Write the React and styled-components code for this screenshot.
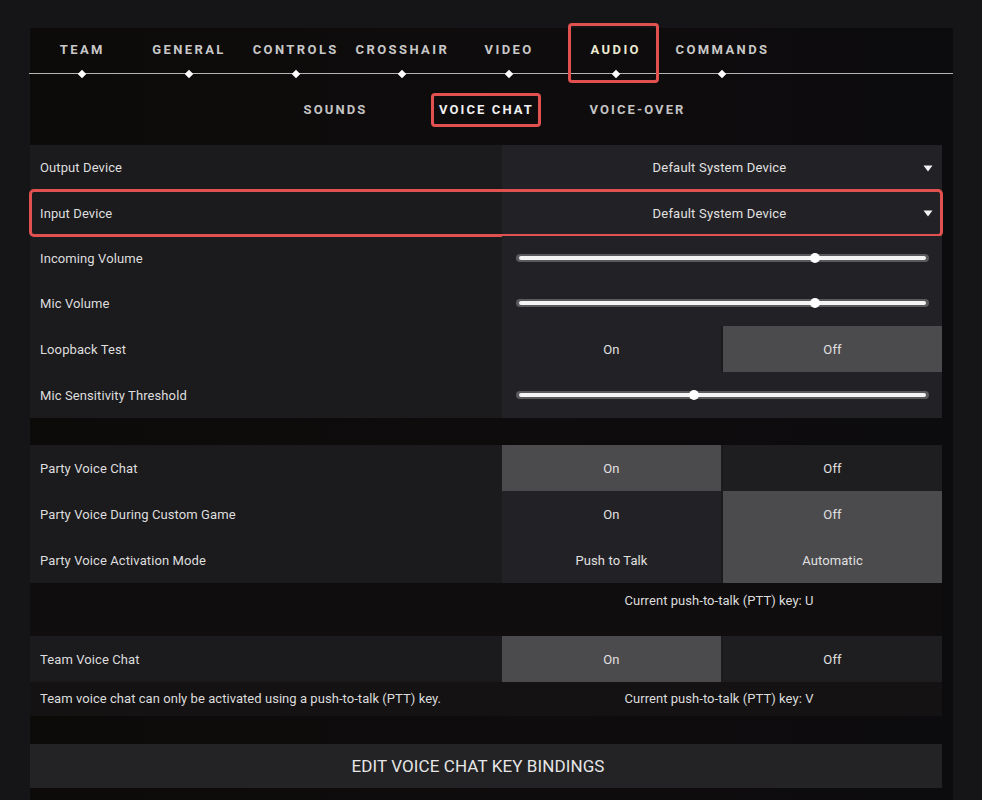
import React from "react";
import styled, { createGlobalStyle } from "styled-components";

const GlobalStyle = createGlobalStyle`
  body {
    margin: 0;
    background: #151517;
    font-family: Roboto, "Liberation Sans", sans-serif;
    color: #dcdcdc;
  }
`;

const Page = styled.div`
  height: 800px;
  overflow: hidden;
  padding-top: 28px;
  box-sizing: border-box;
`;

const Panel = styled.div`
  margin-left: 30px;
  width: 923px;
  height: 772px;
  background: linear-gradient(90deg, #0d0a0a 0%, #0f0c0d 55%, #0c0b0d 100%);
`;

const TabBar = styled.div`
  display: flex;
  height: 45px;
  margin-left: -1px;
  border-bottom: 1px solid #b4b4b4;
`;

const Tab = styled.div`
  position: relative;
  width: 106.7px;
  display: flex;
  justify-content: center;
  padding-top: 15px;
  box-sizing: border-box;
  font-size: 13px;
  font-weight: 700;
  letter-spacing: 2.4px;
  line-height: 14px;
  color: ${(p) => (p.$active ? "#ecebd2" : "#c8c8c8")};

  &::before {
    content: "";
    position: absolute;
    bottom: -4px;
    left: 50%;
    width: 6px;
    height: 6px;
    margin-left: -3px;
    background: #fff;
    transform: rotate(45deg);
  }

  ${(p) =>
    p.$active &&
    `
    &::after {
      content: "";
      position: absolute;
      top: -5px;
      bottom: -10px;
      left: 6px;
      right: 10px;
      border: 3px solid #e0514f;
      border-radius: 4px;
    }
  `}
`;

const SubTabs = styled.div`
  width: 912px;
  height: 71px;
  display: flex;
  justify-content: center;
  align-items: center;
`;

const SubTab = styled.div`
  width: 151px;
  display: flex;
  justify-content: center;
`;

const SubLabel = styled.span`
  padding: 7px 4px 7px 5px;
  border: 3px solid ${(p) => (p.$active ? "#e0514f" : "transparent")};
  border-radius: 4px;
  font-size: 13px;
  font-weight: 700;
  letter-spacing: 2.1px;
  line-height: 14px;
  color: ${(p) => (p.$active ? "#efefef" : "#c4c4c4")};
`;

const Group = styled.div`
  width: 912px;
  background: #1b1a1d;
  margin-bottom: ${(p) => p.$gap || 0}px;
`;

const Row = styled.div`
  position: relative;
  display: grid;
  grid-template-columns: 472px 440px;
  height: ${(p) => p.$h || 46}px;
  font-size: 13px;
  letter-spacing: 0.1px;

  ${(p) =>
    p.$highlight &&
    `
    &::after {
      content: "";
      position: absolute;
      inset: -1px -1px -1px -1px;
      border: 3px solid #e0514f;
      border-radius: 5px;
      pointer-events: none;
    }
  `}
`;

const Label = styled.div`
  display: flex;
  align-items: center;
  padding-left: 10px;
  color: #dedede;
`;

const Control = styled.div`
  background: #222125;
  display: flex;
  align-items: center;
`;

const Dropdown = styled(Control)`
  position: relative;
  justify-content: center;
  padding-right: 5px;
  color: #e2e2e2;
  letter-spacing: 0.2px;

  svg {
    position: absolute;
    right: 9px;
    top: 50%;
    margin-top: -3px;
  }
`;

const SliderBox = styled(Control)`
  padding: 0 13px 0 14px;
`;

const Track = styled.div`
  position: relative;
  flex: 1;
  height: 8px;
  border-radius: 4px;
  background: #5a595c;

  &::before {
    content: "";
    position: absolute;
    left: 3px;
    right: 3px;
    top: 2px;
    height: 4px;
    border-radius: 2px;
    background: #f4f4f4;
  }
`;

const Knob = styled.div`
  position: absolute;
  top: -1px;
  width: 10px;
  height: 10px;
  margin-left: -5px;
  border-radius: 50%;
  background: #ffffff;
`;

const Segments = styled.div`
  display: grid;
  grid-template-columns: 1fr 1fr;
  column-gap: 2px;
`;

const Segment = styled.div`
  display: flex;
  align-items: center;
  justify-content: center;
  background: ${(p) => (p.$on ? "#4b4a4d" : p.$dim ? "#1e1d20" : "#222125")};
  color: #e0e0e0;
`;

const Note = styled.div`
  display: grid;
  grid-template-columns: 472px 440px;
  width: 912px;
  height: ${(p) => p.$h}px;
  padding-top: ${(p) => p.$pt}px;
  box-sizing: border-box;
  background: ${(p) => p.$bg};
  font-size: 13px;
  letter-spacing: 0.05px;
  color: #dcdcdc;
`;

const NoteLeft = styled.div`
  padding-left: 10px;
`;

const NoteRight = styled.div`
  text-align: center;
  padding-right: 6px;
`;

const Spacer = styled.div`
  height: ${(p) => p.$h}px;
`;

const BindButton = styled.div`
  width: 912px;
  height: 44px;
  display: flex;
  align-items: center;
  justify-content: center;
  padding-right: 16px;
  box-sizing: border-box;
  background: #232225;
  font-family: Roboto, "Liberation Sans", sans-serif;
  font-size: 17px;
  color: #e6e6e6;
  letter-spacing: 0.1px;
`;

const tabs = ["TEAM", "GENERAL", "CONTROLS", "CROSSHAIR", "VIDEO", "AUDIO", "COMMANDS"];
const subTabs = ["SOUNDS", "VOICE CHAT", "VOICE-OVER"];

const Arrow = () => (
  <svg width="10" height="7" viewBox="0 0 10 7">
    <path d="M0.5 0.5 H9.5 L5 6.5 Z" fill="#f2f2f2" />
  </svg>
);

const Slider = ({ value }) => (
  <SliderBox>
    <Track>
      <Knob style={{ left: `${value}%` }} />
    </Track>
  </SliderBox>
);

const Toggle = ({ left = "On", right = "Off", sel, dimOther }) => (
  <Segments>
    <Segment $on={sel === 0} $dim={dimOther && sel !== 0}>{left}</Segment>
    <Segment $on={sel === 1} $dim={dimOther && sel !== 1}>{right}</Segment>
  </Segments>
);

export default function App() {
  return (
    <Page>
      <GlobalStyle />
      <Panel>
        <TabBar>
          {tabs.map((t) => (
            <Tab key={t} $active={t === "AUDIO"}>{t}</Tab>
          ))}
        </TabBar>
        <SubTabs>
          {subTabs.map((t) => (
            <SubTab key={t}>
              <SubLabel $active={t === "VOICE CHAT"}>{t}</SubLabel>
            </SubTab>
          ))}
        </SubTabs>

        <Group $gap={27}>
          <Row $h={45}>
            <Label>Output Device</Label>
            <Dropdown>Default System Device<Arrow /></Dropdown>
          </Row>
          <Row $highlight>
            <Label>Input Device</Label>
            <Dropdown>Default System Device<Arrow /></Dropdown>
          </Row>
          <Row $h={44}>
            <Label>Incoming Volume</Label>
            <Slider value={72.5} />
          </Row>
          <Row>
            <Label>Mic Volume</Label>
            <Slider value={72.5} />
          </Row>
          <Row>
            <Label>Loopback Test</Label>
            <Toggle sel={1} />
          </Row>
          <Row>
            <Label>Mic Sensitivity Threshold</Label>
            <Slider value={43} />
          </Row>
        </Group>

        <Group>
          <Row>
            <Label>Party Voice Chat</Label>
            <Toggle sel={0} dimOther />
          </Row>
          <Row>
            <Label>Party Voice During Custom Game</Label>
            <Toggle sel={1} />
          </Row>
          <Row>
            <Label>Party Voice Activation Mode</Label>
            <Toggle left="Push to Talk" right="Automatic" sel={1} />
          </Row>
        </Group>
        <Note $h={53} $pt={10} $bg="#100d0e">
          <NoteLeft />
          <NoteRight>Current push-to-talk (PTT) key: U</NoteRight>
        </Note>
        <Group>
          <Row>
            <Label>Team Voice Chat</Label>
            <Toggle sel={0} dimOther />
          </Row>
        </Group>
        <Note $h={34} $pt={9} $bg="#141213">
          <NoteLeft>Team voice chat can only be activated using a push-to-talk (PTT) key.</NoteLeft>
          <NoteRight>Current push-to-talk (PTT) key: V</NoteRight>
        </Note>
        <Spacer $h={28} />
        <BindButton>EDIT VOICE CHAT KEY BINDINGS</BindButton>
      </Panel>
    </Page>
  );
}
